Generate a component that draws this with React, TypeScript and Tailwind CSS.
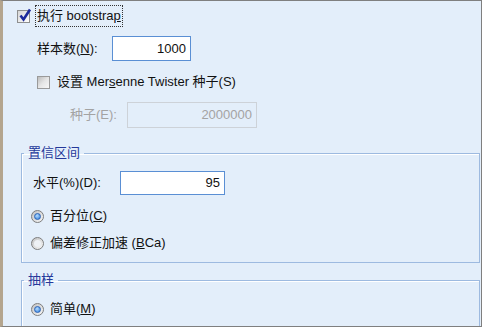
const font = { fontFamily: '"Liberation Sans", "Noto Sans CJK SC", sans-serif' };

function CheckBox({ checked }: { checked?: boolean }) {
  return (
    <span
      className={
        'relative flex h-[13px] w-[13px] shrink-0 items-center justify-center border ' +
        (checked
          ? 'border-[#8e8f8f] bg-gradient-to-br from-[#d6d6d6] to-[#ffffff]'
          : 'border-[#9a9a9a] bg-gradient-to-br from-[#bdbdbd] via-[#e6e6e6] to-[#f7f7f7]')
      }
    >
      {checked && (
        <svg width="14" height="14" viewBox="0 0 14 14" className="absolute -top-[3px] left-[0px]">
          <path d="M2.5 7.5 L5.5 11.5 L12 1.5" fill="none" stroke="#1c2a9c" strokeWidth="2.6" />
        </svg>
      )}
    </span>
  );
}

function Radio({ checked }: { checked?: boolean }) {
  return (
    <span className="flex h-[13px] w-[13px] shrink-0 items-center justify-center rounded-full border border-[#7d7d7d] bg-gradient-to-br from-[#c2c2c2] to-[#f8f8f8]">
      <span
        className={
          'h-[7px] w-[7px] rounded-full ' +
          (checked
            ? 'border border-[#2a63b8] bg-[radial-gradient(circle_at_40%_35%,#b5dcff,#2b7ad8)]'
            : 'bg-[#eef1f5]')
        }
      />
    </span>
  );
}

function Group({ title, children, bottom }: { title: string; children: React.ReactNode; bottom?: string }) {
  return (
    <fieldset
      className={
        'ml-[18px] mr-[1px] border border-[#9dbae0] shadow-[inset_1px_1px_0_#ffffff] ' + (bottom ?? '')
      }
    >
      <legend className="ml-[2px] px-[4px] text-[13px] leading-[16px] text-[#25389a]">{title}</legend>
      {children}
    </fieldset>
  );
}

export default function App() {
  return (
    <div
      style={font}
      className="h-[327px] w-[482px] overflow-hidden border-t border-r border-b border-l-[3px] border-[#7f7f7f] border-l-[#b4a58e] bg-[#e3eefa] text-[13px] text-[#111]"
    >
      <div className="mt-[4px] flex h-[22px] items-center pl-[14px]">
        <CheckBox checked />
        <span className="ml-[5px] flex h-[22px] items-center border border-dotted border-[#333] px-[1px]">
          执行 bootstra<u>p</u>
        </span>
      </div>

      <div className="mt-[9px] flex h-[25px] items-center pl-[34px]">
        <span className="w-[75px]">
          样本数(<u>N</u>):
        </span>
        <div className="flex h-[25px] w-[79px] items-center justify-end border border-[#5a8fd4] bg-white pr-[4px]">
          1000
        </div>
      </div>

      <div className="mt-[13px] flex h-[16px] items-center pl-[34px]">
        <CheckBox />
        <span className="ml-[7px]">
          设置 Mer<u>s</u>enne Twister 种子(S)
        </span>
      </div>

      <div className="mt-[12px] flex h-[26px] items-center pl-[67px] text-[#a3a3a3]">
        <span className="w-[57px]">种子(E):</span>
        <div className="flex h-[26px] w-[130px] items-center justify-end border border-[#cdd2d8] pr-[4px]">
          2000000
        </div>
      </div>

      <div className="mt-[17px]">
        <Group title="置信区间" bottom="pb-[11px]">
          <div className="mt-[10px] flex h-[24px] items-center pl-[11px]">
            <span className="w-[87px]">水平(%)(D):</span>
            <div className="flex h-[24px] w-[105px] items-center justify-end border border-[#5a8fd4] bg-white pr-[4px]">
              95
            </div>
          </div>
          <div className="mt-[13px] flex h-[16px] items-center pl-[9px]">
            <Radio checked />
            <span className="ml-[6px]">
              百分位(<u>C</u>)
            </span>
          </div>
          <div className="mt-[11px] flex h-[16px] items-center pl-[9px]">
            <Radio />
            <span className="ml-[6px]">
              偏差修正加速 (<u>B</u>Ca)
            </span>
          </div>
        </Group>
      </div>

      <div className="mt-[9px]">
        <Group title="抽样" bottom="h-[80px]">
          <div className="mt-[13px] flex h-[16px] items-center pl-[9px]">
            <Radio checked />
            <span className="ml-[6px]">
              简单(<u>M</u>)
            </span>
          </div>
        </Group>
      </div>
    </div>
  );
}
